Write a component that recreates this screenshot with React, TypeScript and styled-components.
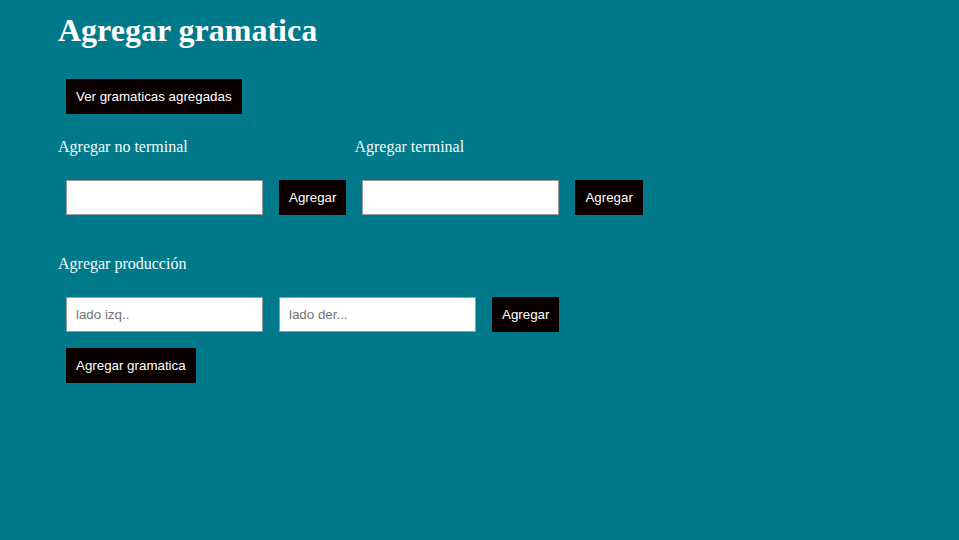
import React from "react";
import styled, { createGlobalStyle } from "styled-components";

const Global = createGlobalStyle`
  html, body {
    margin: 0;
    padding: 0;
    background: #007a8b;
  }
  body {
    font-family: "Liberation Serif", "Times New Roman", serif;
    color: #ffffff;
  }
`;

const Page = styled.div`
  min-height: 540px;
  box-sizing: border-box;
  padding: 12px 0 0 58px;
  background: #007a8b;
`;

const Title = styled.h1`
  margin: 0 0 22px;
  font-size: 32px;
  font-weight: bold;
  line-height: 36.8px;
  color: #ffffff;
`;

const Label = styled.p`
  margin: 16px 0;
  font-size: 16px;
  line-height: 18px;
  color: #f4fbfb;
`;

const Row = styled.div`
  display: flex;
  align-items: flex-start;
`;

const Columns = styled.div`
  display: flex;
  align-items: flex-start;
`;

const Column = styled.div`
  display: flex;
  flex-direction: column;
`;

const Section = styled.div`
  padding-top: 16px;
`;

const Button = styled.button`
  margin: 8px;
  height: 35px;
  padding: 0 10px;
  border: none;
  background: #0a0000;
  color: #ffffff;
  font-family: "Liberation Sans", Arial, sans-serif;
  font-size: 13.33px;
  cursor: pointer;
  white-space: nowrap;
`;

const Input = styled.input`
  margin: 8px;
  width: 197px;
  height: 35px;
  box-sizing: border-box;
  padding: 0 9px;
  border: 1px solid #9a9a9a;
  background: #ffffff;
  font-family: "Liberation Sans", Arial, sans-serif;
  font-size: 13.33px;
  color: #000;
  outline: none;
  &::placeholder {
    color: #757575;
  }
`;

export default function App() {
  return (
    <>
      <Global />
      <Page>
        <Title>Agregar gramatica</Title>
        <Row>
          <Button>Ver gramaticas agregadas</Button>
        </Row>
        <Columns>
          <Column>
            <Label>Agregar no terminal</Label>
            <Row>
              <Input />
              <Button>Agregar</Button>
            </Row>
          </Column>
          <Column>
            <Label>Agregar terminal</Label>
            <Row>
              <Input />
              <Button>Agregar</Button>
            </Row>
          </Column>
        </Columns>
        <Section>
          <Label>Agregar producción</Label>
          <Row>
            <Input placeholder="lado izq.." />
            <Input placeholder="lado der..." />
            <Button>Agregar</Button>
          </Row>
          <Row>
            <Button>Agregar gramatica</Button>
          </Row>
        </Section>
      </Page>
    </>
  );
}
